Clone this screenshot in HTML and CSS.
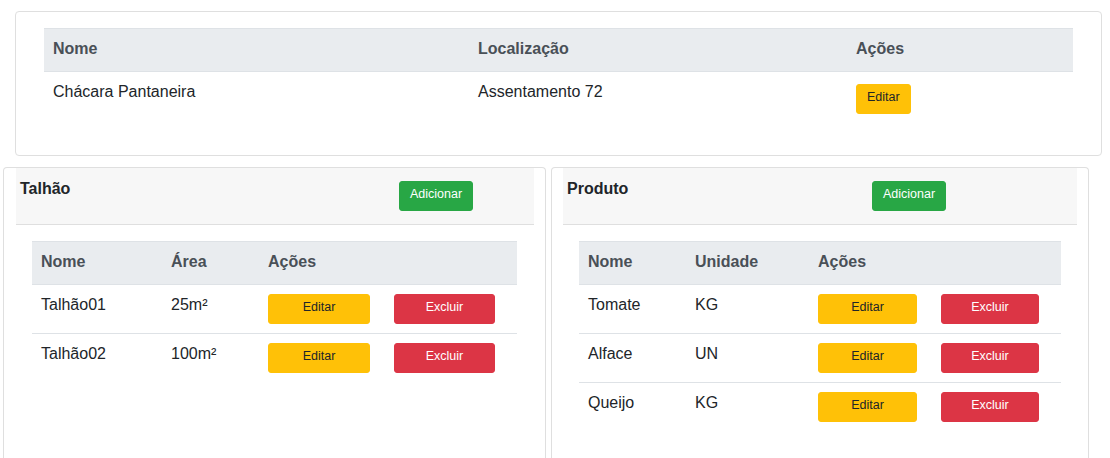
FILE: index.html
```html
<!DOCTYPE html>
<html lang="pt-BR">
<head>
<meta charset="utf-8">
<title>Propriedade</title>
<link rel="stylesheet" href="styles.css">
</head>
<body>
<div class="page">
  <section class="card card-top">
    <table class="tbl tbl-top">
      <colgroup><col class="c-top-1"><col class="c-top-2"><col class="c-top-3"></colgroup>
      <thead>
        <tr><th>Nome</th><th>Localização</th><th>Ações</th></tr>
      </thead>
      <tbody>
        <tr>
          <td class="txt">Chácara Pantaneira</td>
          <td class="txt">Assentamento 72</td>
          <td class="act"><button class="btn btn-warning btn-small">Editar</button></td>
        </tr>
      </tbody>
    </table>
  </section>

  <div class="row">
    <section class="card card-sub card-talhao">
      <div class="card-head">
        <h5 class="card-title">Talhão</h5>
        <button class="btn btn-success">Adicionar</button>
      </div>
      <div class="card-body">
        <table class="tbl tbl-talhao">
          <colgroup><col class="c-t-1"><col class="c-t-2"><col class="c-t-3"><col class="c-t-4"></colgroup>
          <thead>
            <tr><th>Nome</th><th>Área</th><th>Ações</th><th></th></tr>
          </thead>
          <tbody>
            <tr>
              <td class="txt">Talhão01</td><td class="txt">25m²</td>
              <td class="act"><button class="btn btn-warning btn-edit">Editar</button></td>
              <td class="act"><button class="btn btn-danger btn-del">Excluir</button></td>
            </tr>
            <tr>
              <td class="txt">Talhão02</td><td class="txt">100m²</td>
              <td class="act"><button class="btn btn-warning btn-edit">Editar</button></td>
              <td class="act"><button class="btn btn-danger btn-del">Excluir</button></td>
            </tr>
          </tbody>
        </table>
      </div>
    </section>

    <section class="card card-sub card-produto">
      <div class="card-head">
        <h5 class="card-title">Produto</h5>
        <button class="btn btn-success">Adicionar</button>
      </div>
      <div class="card-body">
        <table class="tbl tbl-produto">
          <colgroup><col class="c-p-1"><col class="c-p-2"><col class="c-p-3"><col class="c-p-4"></colgroup>
          <thead>
            <tr><th>Nome</th><th>Unidade</th><th>Ações</th><th></th></tr>
          </thead>
          <tbody>
            <tr>
              <td class="txt">Tomate</td><td class="txt">KG</td>
              <td class="act"><button class="btn btn-warning btn-edit">Editar</button></td>
              <td class="act"><button class="btn btn-danger btn-del">Excluir</button></td>
            </tr>
            <tr>
              <td class="txt">Alface</td><td class="txt">UN</td>
              <td class="act"><button class="btn btn-warning btn-edit">Editar</button></td>
              <td class="act"><button class="btn btn-danger btn-del">Excluir</button></td>
            </tr>
            <tr>
              <td class="txt">Queijo</td><td class="txt">KG</td>
              <td class="act"><button class="btn btn-warning btn-edit">Editar</button></td>
              <td class="act"><button class="btn btn-danger btn-del">Excluir</button></td>
            </tr>
          </tbody>
        </table>
      </div>
    </section>
  </div>
</div>
</body>
</html>
```
FILE: styles.css
```css
* { box-sizing: border-box; }

html, body {
  margin: 0;
  padding: 0;
  background: #fff;
}

body {
  font-family: "Liberation Sans", Arial, Helvetica, sans-serif;
  font-size: 16px;
  color: #212529;
  overflow: hidden;
}

.page {
  padding-top: 11px;
}

.card {
  background: #fff;
  border: 1px solid #dfdfdf;
  border-radius: 4px;
}

.card-top {
  width: 1087px;
  margin-left: 15px;
  padding: 16px 28px 32px;
}

.row {
  display: flex;
  gap: 5px;
  margin-top: 11px;
  padding-left: 3px;
  align-items: flex-start;
}

.card-sub {
  min-height: 330px;
  padding: 0 11px;
  border-bottom: none;
}

.card-talhao {
  width: 543px;
  padding-left: 12px;
}

.card-produto {
  width: 538px;
}

.card-head {
  display: flex;
  align-items: flex-start;
  background: #f7f7f7;
  border-bottom: 1px solid #dfdfdf;
  padding: 13px 4px;
  height: 57px;
}

.card-title {
  margin: 0;
  font-size: 16px;
  font-weight: bold;
  line-height: 16px;
  color: #212529;
}

.card-talhao .card-title { width: 379px; }
.card-produto .card-title { width: 305px; }

.card-body {
  padding: 16px 16px 0;
}

.card-talhao .card-body {
  padding-right: 17px;
}

.tbl {
  border-collapse: separate;
  border-spacing: 0;
  table-layout: fixed;
  width: 100%;
}

.tbl th {
  text-align: left;
  font-weight: bold;
  color: #495057;
  background: #e9ecef;
  border-top: 1px solid #dee2e6;
  border-bottom: 1px solid #dee2e6;
  padding: 11px 9px 13px;
  line-height: 18px;
  vertical-align: top;
}

.tbl td {
  line-height: 18px;
  vertical-align: top;
  white-space: nowrap;
}

.tbl td.txt {
  padding: 11px 9px 7px;
}

.tbl td.act {
  padding: 9px 9px 9px;
}

.tbl tbody tr + tr td {
  border-top: 1px solid #dee2e6;
}

.c-top-1 { width: 425px; }
.c-top-2 { width: 378px; }
.c-top-3 { width: 226px; }

.c-t-1 { width: 130px; }
.c-t-2 { width: 97px; }
.c-t-3 { width: 126px; }
.c-t-4 { width: 132px; }

.c-p-1 { width: 107px; }
.c-p-2 { width: 123px; }
.c-p-3 { width: 123px; }
.c-p-4 { width: 129px; }

.btn {
  display: inline-block;
  font-family: "Liberation Sans", Arial, Helvetica, sans-serif;
  font-size: 12.5px;
  line-height: 14px;
  height: 30px;
  padding: 5px 10px 9px;
  border: 1px solid transparent;
  border-radius: 3px;
  text-align: center;
  vertical-align: top;
  margin: 0;
  cursor: pointer;
}

.btn-warning {
  background: #ffc107;
  border-color: #ffc107;
  color: #212529;
}

.btn-danger {
  background: #dc3545;
  border-color: #dc3545;
  color: #fff;
}

.btn-success {
  background: #28a745;
  border-color: #28a745;
  color: #fff;
}

.btn-small {
  margin-top: 3px;
}

.tbl-talhao .btn-edit { width: 102px; }
.tbl-talhao .btn-del { width: 101px; }
.tbl-produto .btn-edit { width: 99px; }
.tbl-produto .btn-del { width: 98px; }
```
